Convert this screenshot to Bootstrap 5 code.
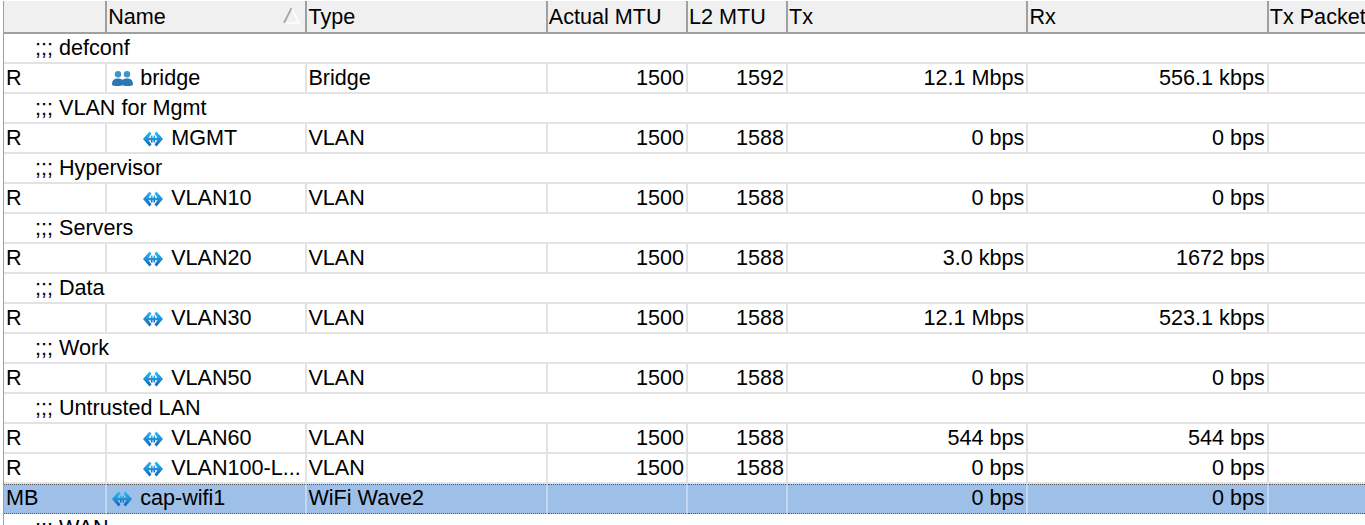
<!DOCTYPE html>
<html lang="en">
<head>
<meta charset="utf-8">
<title>Interfaces</title>
<link href="https://cdn.jsdelivr.net/npm/bootstrap@5.3.0/dist/css/bootstrap.min.css" rel="stylesheet">
<style>
html,body{height:525px;overflow:hidden;background:#fff;}
body{font-family:"Liberation Sans",Arial,sans-serif;font-size:21.6px;color:#000;}
.wb-frame{padding:1px 0 0 3px;width:1365px;height:525px;overflow:hidden;}
.wb-frame>.wb-list{border-left:1px solid #a0a0a0;}
.wb-list{table-layout:fixed;width:1400px;margin:0;border-collapse:separate;border-spacing:0;--bs-table-bg:transparent;}
.wb-list th,.wb-list td{padding:0 2px 0 1px;height:30px;line-height:27px;font-weight:400;font-size:21.6px;white-space:nowrap;overflow:hidden;border:0;border-bottom:2px solid #e3e3e3;border-right:2px solid #e3e3e3;box-shadow:none;color:#000;}
.wb-list th{height:33px;line-height:30px;background:#f0f0f0;border-bottom:2px solid #a0a0a0;border-right:2px solid #a0a0a0;position:relative;}
.wb-list td:first-child{padding-left:2px;}
.wb-list td.wb-note{border-right:0;padding-left:31px;}
.wb-list td.wb-num{text-align:right;}
.wb-list tr.wb-sel td{background:#9dbfe8;border-right-color:#c4d7f0;border-top:1px dotted #555;border-bottom:1px dotted #555;line-height:26px;}
.wb-sort{position:absolute;right:5px;top:6px;}
.wb-in1{padding-left:5px!important;}
.wb-in2{padding-left:36px!important;}
.wb-ico{display:inline-block;vertical-align:-2px;margin-right:8px;}
.wb-ico-br{vertical-align:-1px;margin-right:7px;}
</style>
</head>
<body>
<svg width="0" height="0" class="d-block" aria-hidden="true">
<defs>
<linearGradient id="wg" x1="0" y1="0" x2="0" y2="1"><stop offset="0" stop-color="#2cc0f8"/><stop offset="1" stop-color="#1560b4"/></linearGradient>
<symbol id="wb-vlan" viewBox="0 0 20 16">
<path d="M6.500 0.500 L0 8 L6.500 15.500 L8.500 13.500 L5.500 9.200 H14.500 L11.500 13.500 L13.500 15.500 L20 8 L13.500 0.500 L11.500 2.500 L14.500 6.800 H5.500 L8.500 2.500 Z" fill="url(#wg)"/>
<path d="M8 4.500h1.500v7H8zM10.500 4.500H12v7h-1.500z" fill="url(#wg)"/>
</symbol>
<symbol id="wb-bridge" viewBox="0 0 21 15">
<circle cx="6" cy="3.300" r="3.200" fill="#3f93cf"/><circle cx="15" cy="3.300" r="3.200" fill="#3f93cf"/>
<path d="M0 13.500C0 9 2.500 7.500 6 7.500c2 0 3.500.5 4.500 1.500 1-1 2.500-1.500 4.500-1.500 3.500 0 6 1.500 6 6 0 1-2.500 1.500-6 1.500-2 0-3.500-.2-4.500-.7-1 .5-2.500.7-4.500.7-3.500 0-6-.5-6-1.500z" fill="#2b78b4"/>
</symbol>
</defs>
</svg>
<div class="wb-frame">
<table class="table wb-list">
<colgroup><col style="width:103px"><col style="width:200px"><col style="width:240px"><col style="width:140px"><col style="width:100px"><col style="width:240px"><col style="width:240px"><col style="width:134px"></colgroup>
<thead><tr><th></th><th>Name<svg class="wb-sort" width="17" height="17" viewBox="0 0 17 17"><path d="M8.500 1 L16 16 H1" stroke="#fff" stroke-width="1.500" fill="none"/><path d="M8.500 1 L1 16" stroke="#a8a8a8" stroke-width="1.800" fill="none"/></svg></th><th>Type</th><th>Actual MTU</th><th>L2 MTU</th><th>Tx</th><th>Rx</th><th>Tx Packet</th></tr></thead>
<tbody>
<tr><td colspan="8" class="wb-note">;;; defconf</td></tr>
<tr><td>R</td><td class="wb-in1"><svg class="wb-ico wb-ico-br" width="21" height="15"><use href="#wb-bridge"/></svg>bridge</td><td>Bridge</td><td class="wb-num">1500</td><td class="wb-num">1592</td><td class="wb-num">12.1 Mbps</td><td class="wb-num">556.1 kbps</td><td></td></tr>
<tr><td colspan="8" class="wb-note">;;; VLAN for Mgmt</td></tr>
<tr><td>R</td><td class="wb-in2"><svg class="wb-ico" width="20" height="16"><use href="#wb-vlan"/></svg>MGMT</td><td>VLAN</td><td class="wb-num">1500</td><td class="wb-num">1588</td><td class="wb-num">0 bps</td><td class="wb-num">0 bps</td><td></td></tr>
<tr><td colspan="8" class="wb-note">;;; Hypervisor</td></tr>
<tr><td>R</td><td class="wb-in2"><svg class="wb-ico" width="20" height="16"><use href="#wb-vlan"/></svg>VLAN10</td><td>VLAN</td><td class="wb-num">1500</td><td class="wb-num">1588</td><td class="wb-num">0 bps</td><td class="wb-num">0 bps</td><td></td></tr>
<tr><td colspan="8" class="wb-note">;;; Servers</td></tr>
<tr><td>R</td><td class="wb-in2"><svg class="wb-ico" width="20" height="16"><use href="#wb-vlan"/></svg>VLAN20</td><td>VLAN</td><td class="wb-num">1500</td><td class="wb-num">1588</td><td class="wb-num">3.0 kbps</td><td class="wb-num">1672 bps</td><td></td></tr>
<tr><td colspan="8" class="wb-note">;;; Data</td></tr>
<tr><td>R</td><td class="wb-in2"><svg class="wb-ico" width="20" height="16"><use href="#wb-vlan"/></svg>VLAN30</td><td>VLAN</td><td class="wb-num">1500</td><td class="wb-num">1588</td><td class="wb-num">12.1 Mbps</td><td class="wb-num">523.1 kbps</td><td></td></tr>
<tr><td colspan="8" class="wb-note">;;; Work</td></tr>
<tr><td>R</td><td class="wb-in2"><svg class="wb-ico" width="20" height="16"><use href="#wb-vlan"/></svg>VLAN50</td><td>VLAN</td><td class="wb-num">1500</td><td class="wb-num">1588</td><td class="wb-num">0 bps</td><td class="wb-num">0 bps</td><td></td></tr>
<tr><td colspan="8" class="wb-note">;;; Untrusted LAN</td></tr>
<tr><td>R</td><td class="wb-in2"><svg class="wb-ico" width="20" height="16"><use href="#wb-vlan"/></svg>VLAN60</td><td>VLAN</td><td class="wb-num">1500</td><td class="wb-num">1588</td><td class="wb-num">544 bps</td><td class="wb-num">544 bps</td><td></td></tr>
<tr><td>R</td><td class="wb-in2"><svg class="wb-ico" width="20" height="16"><use href="#wb-vlan"/></svg>VLAN100-L...</td><td>VLAN</td><td class="wb-num">1500</td><td class="wb-num">1588</td><td class="wb-num">0 bps</td><td class="wb-num">0 bps</td><td></td></tr>
<tr class="wb-sel"><td>MB</td><td class="wb-in1"><svg class="wb-ico" width="20" height="16"><use href="#wb-vlan"/></svg>cap-wifi1</td><td>WiFi Wave2</td><td></td><td></td><td class="wb-num">0 bps</td><td class="wb-num">0 bps</td><td></td></tr>
<tr><td colspan="8" class="wb-note">;;; WAN</td></tr>
</tbody>
</table>
</div>
</body>
</html>
